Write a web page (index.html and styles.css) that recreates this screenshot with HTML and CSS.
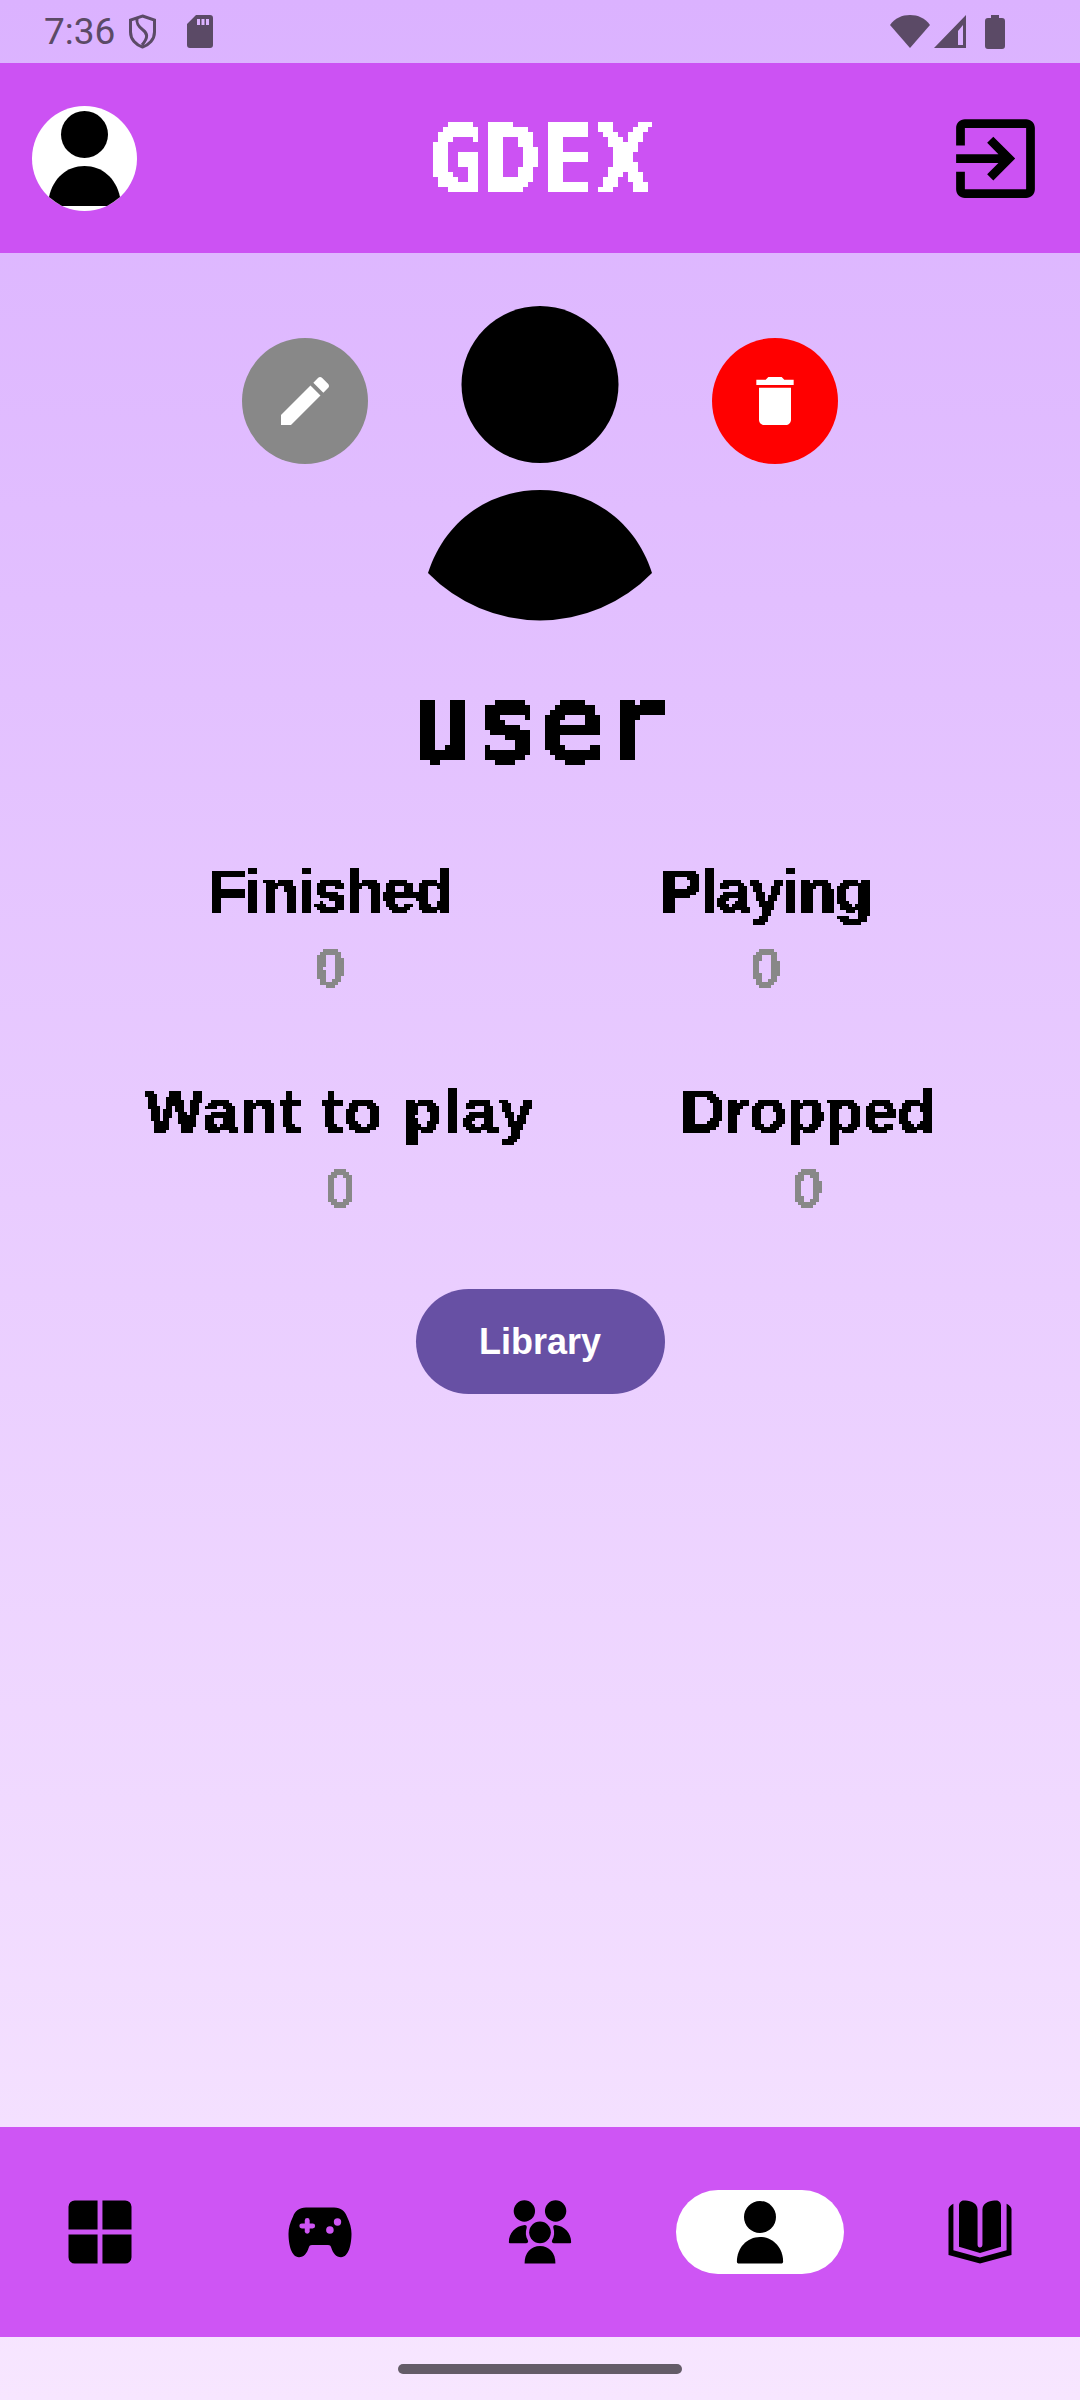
FILE: index.html
```html
<!DOCTYPE html>
<html lang="en">
<head>
    <meta charset="UTF-8">
    <title>GDEX</title>
    <link rel="stylesheet" href="styles.css">
</head>
<body>
    <svg class="filter-defs" aria-hidden="true">
        <filter id="pixel" x="0" y="0" width="100%" height="100%" color-interpolation-filters="sRGB">
            <feFlood x="2" y="2" width="1" height="1"/>
            <feComposite width="5" height="5"/>
            <feTile result="grid"/>
            <feComposite in="SourceGraphic" in2="grid" operator="in"/>
            <feMorphology operator="dilate" radius="2"/>
            <feComponentTransfer>
                <feFuncA type="discrete" tableValues="0 1"/>
            </feComponentTransfer>
        </filter>
        <filter id="pixel-small" x="0" y="0" width="100%" height="100%" color-interpolation-filters="sRGB">
            <feFlood x="1" y="1" width="1" height="1"/>
            <feComposite width="3" height="3"/>
            <feTile result="grid"/>
            <feComposite in="SourceGraphic" in2="grid" operator="in"/>
            <feMorphology operator="dilate" radius="1"/>
            <feComponentTransfer>
                <feFuncA type="discrete" tableValues="0 1"/>
            </feComponentTransfer>
        </filter>
    </svg>

    <!-- Statusleiste -->
    <div class="status-bar">
        <div class="status-left">
            <span class="clock">7:36</span>
            <svg class="shield" width="29" height="35" viewBox="0 0 29 35">
                <path d="M14.5 2 26.5 6V18C26.5 25.5 21 31 14.5 33 8 31 2.5 25.5 2.5 18V6Z" fill="none" stroke="#5b4a66" stroke-width="3"/>
                <path d="M9 4C8 10 11 13 15 16 19 19 21 23 14 31" fill="none" stroke="#5b4a66" stroke-width="3"/>
            </svg>
            <svg class="sd-card" width="26" height="33" viewBox="0 0 26 33">
                <path fill-rule="evenodd" fill="#5b4a66" d="M9 0H23a3 3 0 0 1 3 3V30a3 3 0 0 1-3 3H3a3 3 0 0 1-3-3V9ZM10 4V10H13V4ZM14.500 4V10H17.500V4ZM19 4V10H22V4Z"/>
            </svg>
        </div>
        <div class="status-right">
            <svg width="40" height="33" viewBox="0 0 40 33">
                <path fill="#5b4a66" d="M0 10C5 3 12 0 20 0 28 0 35 3 40 10L20 33Z"/>
            </svg>
            <svg width="32" height="33" viewBox="0 0 32 33">
                <path fill-rule="evenodd" fill="#5b4a66" d="M32 0V33H0ZM24 16V30H29V10Z"/>
            </svg>
            <svg class="battery" width="20" height="34" viewBox="0 0 20 34">
                <path fill="#5b4a66" d="M6 0H14V3H17a3 3 0 0 1 3 3V31a3 3 0 0 1-3 3H3a3 3 0 0 1-3-3V6a3 3 0 0 1 3-3H6Z"/>
            </svg>
        </div>
    </div>

    <!-- Kopfzeile -->
    <header class="top-bar">
        <svg class="top-avatar" width="105" height="105" viewBox="0 0 105 105">
            <circle cx="52.500" cy="52.500" r="52.500" fill="#fff"/>
            <circle cx="52.500" cy="28.500" r="23.500"/>
            <path d="M17 91C21 72 35 60 52.500 60 70 60 84 72 88 91Q82 96 75 100H30Q23 96 17 91Z"/>
        </svg>
        <span class="app-title">GDEX</span>
        <svg class="logout" width="105" height="105" viewBox="0 0 24 24">
            <path d="M10.090 15.590 11.500 17l5-5-5-5-1.410 1.410L12.670 11H3v2h9.670l-2.580 2.590zM19 3H5c-1.110 0-2 .9-2 2v4h2V5h14v14H5v-4H3v4c0 1.100.89 2 2 2h14c1.100 0 2-.9 2-2V5c0-1.100-.9-2-2-2z"/>
        </svg>
    </header>

    <main class="profile">
        <div class="profile-row">
            <div class="round-btn round-btn-edit">
                <svg width="64" height="64" viewBox="0 0 24 24" fill="#fff">
                    <path d="M3 17.250V21h3.750L17.810 9.940l-3.750-3.750L3 17.250zM20.710 7.040c.39-.39.39-1.020 0-1.410l-2.340-2.340c-.39-.39-1.020-.39-1.410 0l-1.830 1.830 3.750 3.750 1.830-1.830z"/>
                </svg>
            </div>
            <svg class="big-avatar" width="240" height="320" viewBox="0 0 240 320">
                <circle cx="120" cy="79.500" r="78.500"/>
                <path d="M8 268C25 215 70 185 120 185 170 185 215 215 232 268A156 156 0 0 1 8 268Z"/>
            </svg>
            <div class="round-btn round-btn-delete">
                <svg width="64" height="64" viewBox="0 0 24 24" fill="#fff">
                    <path d="M6 19c0 1.100.9 2 2 2h8c1.100 0 2-.9 2-2V7H6v12zM19 4h-3.500l-1-1h-5l-1 1H5v2h14V4z"/>
                </svg>
            </div>
        </div>

        <h1 class="username">user</h1>

        <div class="stats-row stats-row-first">
            <div class="stat">
                <span class="stat-label label-finished">Finished</span>
                <span class="stat-value">0</span>
            </div>
            <div class="stat">
                <span class="stat-label label-playing">Playing</span>
                <span class="stat-value">0</span>
            </div>
        </div>
        <div class="stats-row">
            <div class="stat">
                <span class="stat-label label-want">Want to play</span>
                <span class="stat-value">0</span>
            </div>
            <div class="stat">
                <span class="stat-label label-dropped">Dropped</span>
                <span class="stat-value">0</span>
            </div>
        </div>

        <button class="library-btn">Library</button>
    </main>

    <!-- Navigation unten -->
    <nav class="bottom-nav">
        <div class="nav-item">
            <svg width="84" height="84" viewBox="0 0 24 24">
                <path d="M11.300 3H4.800A1.800 1.800 0 0 0 3 4.800v6.500h8.300zM12.700 3h6.500A1.800 1.800 0 0 1 21 4.800v6.500h-8.300zM11.300 12.700H3v6.500A1.800 1.800 0 0 0 4.800 21h6.500zM12.700 12.700H21v6.500a1.800 1.800 0 0 1-1.800 1.800h-6.500z"/>
            </svg>
        </div>
        <div class="nav-item">
            <svg width="84" height="84" viewBox="0 0 24 24">
                <path d="M8 5H16C18 5 19.100 6 19.700 7.600 20.600 9.500 21 11 21 12.500 21 15.500 20.200 19.200 18 19.200 16.600 19.200 15.700 18 15.200 16.400 15 15.900 14.800 15.700 14.300 15.700H9.700C9.200 15.700 9 15.900 8.800 16.400 8.300 18 7.400 19.200 6 19.200 3.800 19.200 3 15.500 3 12.500 3 11 3.400 9.500 4.300 7.600 4.900 6 6 5 8 5Z"/>
                <rect class="icon-hole" x="6.100" y="9.600" width="4.500" height="1.400" rx=".7"/>
                <rect class="icon-hole" x="7.650" y="8" width="1.400" height="4.500" rx=".7"/>
                <circle class="icon-hole" cx="14.830" cy="11.430" r="1.080"/>
                <circle class="icon-hole" cx="17" cy="9.140" r="1.050"/>
            </svg>
        </div>
        <div class="nav-item">
            <svg width="84" height="84" viewBox="0 0 24 24">
                <circle cx="7.540" cy="6" r="3.050"/>
                <circle cx="16.460" cy="6" r="3.050"/>
                <circle cx="12" cy="12.100" r="3.100"/>
                <path d="M3.100 14.900C3.100 12.300 5 10.300 7.600 10 8.100 10 8.300 10.400 8.200 10.800 7.800 12 7.900 13.300 8.500 14.300 8.800 14.800 8.500 15.200 8 15.200H3.500C3.300 15.200 3.100 15.100 3.100 14.900Z"/>
                <path d="M20.900 14.900C20.900 12.300 19 10.300 16.400 10 15.900 10 15.700 10.400 15.800 10.800 16.200 12 16.100 13.300 15.500 14.300 15.200 14.800 15.500 15.200 16 15.200H20.500C20.700 15.200 20.900 15.100 20.900 14.900Z"/>
                <path d="M7.600 21C7.500 18 9.500 16 12 16 14.500 16 16.500 18 16.400 21Z"/>
            </svg>
        </div>
        <div class="nav-item nav-item-active">
            <svg width="84" height="84" viewBox="0 0 24 24">
                <circle cx="12" cy="7.700" r="4.570"/>
                <path d="M5.400 20.400C5.400 16.500 8.300 13.400 12 13.400 15.700 13.400 18.600 16.500 18.600 20.400 18.600 20.800 18.400 21 18 21H6C5.600 21 5.400 20.800 5.400 20.400Z"/>
            </svg>
        </div>
        <div class="nav-item">
            <svg width="84" height="84" viewBox="0 0 24 24">
                <path d="M4.400 3.900V17.200L12 19.300 19.600 17.200V3.900C20.500 4.300 21 5 21 5.500V18.600L12 21 3 18.600V5.500C3 5 3.500 4.300 4.400 3.900Z"/>
                <path d="M6 4.400C6 3.600 6.700 3 7.400 3 8.500 3 11.300 3.300 11.300 5.600V15.500C11.300 16.200 11.600 16.400 12 16.400 12.400 16.400 12.700 16.200 12.700 15.500V5.600C12.700 3.300 15.500 3 16.600 3 17.300 3 18 3.600 18 4.400V16.200L12 18 6 16.200Z"/>
            </svg>
        </div>
    </nav>

    <div class="gesture-area">
        <div class="gesture-handle"></div>
    </div>
</body>
</html>
```

FILE: styles.css
```css
/* Grundlayout */

body {
    margin: 0;
    width: 1080px;
    height: 2400px;
    display: flex;
    flex-direction: column;
    overflow: hidden;
    font-family: "Liberation Sans", Arial, sans-serif;
    background: linear-gradient(180deg, #dbb2ff 0%, #f7e6ff 100%);
}

.filter-defs {
    display: block;
    width: 0;
    height: 0;
}

/* Statusleiste */

.status-bar {
    height: 63px;
    display: flex;
    justify-content: space-between;
    align-items: center;
    padding: 0 75px 0 44px;
}

.status-left,
.status-right {
    display: flex;
    align-items: center;
}

.clock {
    font-family: Roboto, sans-serif;
    font-size: 37px;
    color: #5b4a66;
}

.shield {
    margin-left: 13px;
}

.sd-card {
    margin-left: 30px;
}

.status-right {
    gap: 4px;
}

.battery {
    margin-left: 15px;
}

/* Kopfzeile */

.top-bar {
    height: 190px;
    display: flex;
    justify-content: space-between;
    align-items: center;
    padding: 0 32px;
    background-color: #cc52f3;
}

.app-title {
    padding-top: 4px;
    font-family: "DejaVu Sans Mono", monospace;
    font-weight: bold;
    font-size: 93px;
    color: #fff;
    -webkit-text-stroke: 1px #fff;
    filter: url(#pixel);
}

/* Profil */

.profile {
    flex: 1;
    display: flex;
    flex-direction: column;
    align-items: center;
}

.profile-row {
    display: flex;
    justify-content: center;
    gap: 52px;
    padding-top: 52px;
}

.round-btn {
    width: 126px;
    height: 126px;
    margin-top: 33px;
    border-radius: 50%;
    display: flex;
    justify-content: center;
    align-items: center;
}

.round-btn-edit {
    background-color: #888;
}

.round-btn-delete {
    background-color: #f00;
}

.username {
    margin: 45px 0 0 0;
    font-family: "DejaVu Sans Mono", monospace;
    font-weight: bold;
    font-size: 108px;
    line-height: 108px;
    color: #000;
    -webkit-text-stroke: 1px #000;
    filter: url(#pixel);
}

.stats-row {
    align-self: stretch;
    display: flex;
    justify-content: space-evenly;
    margin-top: 80px;
}

.stats-row-first {
    margin-top: 78px;
}

.stat {
    display: flex;
    flex-direction: column;
    align-items: center;
    gap: 14px;
}

.stat-label {
    font-weight: bold;
    font-size: 62px;
    line-height: 70px;
    color: #000;
    -webkit-text-stroke: 1px #000;
    filter: url(#pixel-small);
}

.label-finished {
    letter-spacing: -1.5px;
}

.label-playing {
    letter-spacing: -1.3px;
}

.label-want {
    letter-spacing: 2px;
}

.label-dropped {
    letter-spacing: 0;
}

.stat-value {
    font-weight: bold;
    font-size: 56px;
    line-height: 56px;
    color: #888;
    filter: url(#pixel-small);
}

.library-btn {
    width: 249px;
    height: 105px;
    margin-top: 73px;
    padding: 0;
    border: none;
    border-radius: 53px;
    background-color: #6750a4;
    color: #fff;
    font-family: "Liberation Sans", Arial, sans-serif;
    font-weight: bold;
    font-size: 36px;
}

/* Navigation unten */

.bottom-nav {
    height: 210px;
    display: flex;
    justify-content: center;
    align-items: center;
    gap: 52px;
    background-color: #ce55f4;
}

.nav-item {
    width: 168px;
    height: 84px;
    display: flex;
    justify-content: center;
    align-items: center;
    border-radius: 42px;
}

.nav-item-active {
    background-color: #fff;
}

.icon-hole {
    fill: #ce55f4;
}

.gesture-area {
    height: 63px;
    display: flex;
    justify-content: center;
    align-items: center;
}

.gesture-handle {
    width: 284px;
    height: 10px;
    border-radius: 5px;
    background-color: #645c68;
}
```
